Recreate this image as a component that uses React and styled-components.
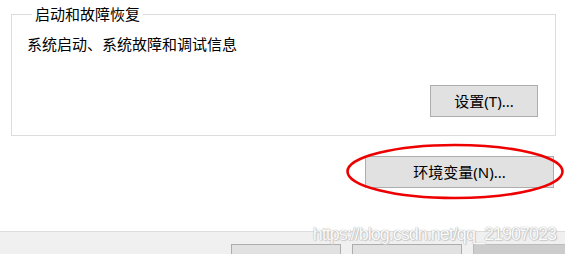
import styled, { createGlobalStyle } from "styled-components";

const GlobalStyle = createGlobalStyle`
  html, body {
    margin: 0;
    padding: 0;
    background: #ffffff;
  }
  body {
    font-family: "Noto Sans", "Noto Sans CJK SC", sans-serif;
    font-size: 15px;
    color: #000000;
  }
`;

const Page = styled.div`
  position: relative;
  width: 565px;
  height: 254px;
  overflow: hidden;
  display: flex;
  flex-direction: column;
  background: #ffffff;
`;

const Main = styled.div`
  flex: 0 0 227px;
  padding: 4px 10px 0 11px;
  display: flex;
  flex-direction: column;
`;

const GroupBox = styled.fieldset`
  margin: 0;
  width: 545px;
  box-sizing: border-box;
  border: 1px solid #dcdcdc;
  padding: 10px 17px 18px 15px;
  min-inline-size: 0;
  display: flex;
  flex-direction: column;
`;

const Legend = styled.legend`
  margin-left: 5px;
  padding: 0 3px;
  line-height: 20px;
`;

const Description = styled.p`
  margin: 0;
  line-height: 20px;
`;

const ButtonRow = styled.div`
  display: flex;
  justify-content: flex-end;
  margin-top: ${(p) => p.$gap || 0}px;
`;

const Button = styled.button`
  box-sizing: border-box;
  width: ${(p) => p.$width}px;
  height: 32px;
  padding: 0;
  border: 1px solid ${(p) => (p.$dim ? "#bcbcbc" : "#adadad")};
  background: ${(p) => (p.$dim ? "#cccccc" : "#e1e1e1")};
  font: inherit;
  line-height: 30px;
  color: #000000;
  text-align: center;
  flex: 0 0 auto;
`;

const Marked = styled.div`
  position: relative;
  margin-right: 1px;
`;

const Ring = styled.svg`
  position: absolute;
  left: -20px;
  top: -13px;
  width: 222px;
  height: 58px;
  overflow: visible;
  pointer-events: none;
`;

const Footer = styled.div`
  flex: 1;
  border-top: 1px solid #dcdcdc;
  background: #f0f0f0;
  padding-top: 12px;
  display: flex;
  justify-content: flex-end;
`;

const FooterButtons = styled.div`
  display: flex;
  gap: 11px;
  margin-right: -18px;

  ${Button} {
    line-height: 34px;
  }
`;

const Watermark = styled.div`
  position: absolute;
  right: 9px;
  top: 225px;
  font-family: "Liberation Sans", Arial, sans-serif;
  font-size: 18px;
  letter-spacing: -1px;
  line-height: 18px;
  color: rgba(255, 255, 255, 0.95);
  text-shadow: 0 0 1px #b4b4b4, 0 0 1px #b4b4b4, 1px 1px 1px #d0d0d0;
  pointer-events: none;
`;

export default function App() {
  return (
    <>
      <GlobalStyle />
      <Page>
        <Main>
          <GroupBox>
            <Legend>启动和故障恢复</Legend>
            <Description>系统启动、系统故障和调试信息</Description>
            <ButtonRow $gap={31}>
              <Button $width={108}>设置(T)...</Button>
            </ButtonRow>
          </GroupBox>
          <ButtonRow $gap={20}>
            <Marked>
              <Button $width={189}>环境变量(N)...</Button>
              <Ring viewBox="0 0 222 58">
                <ellipse
                  cx="110"
                  cy="28.5"
                  rx="107.5"
                  ry="26.5"
                  fill="none"
                  stroke="#ee0000"
                  strokeWidth="2.6"
                />
              </Ring>
            </Marked>
          </ButtonRow>
        </Main>
        <Footer>
          <FooterButtons>
            <Button $width={110}>确定</Button>
            <Button $width={110}>取消</Button>
            <Button $width={110} $dim>应用(A)</Button>
          </FooterButtons>
        </Footer>
        <Watermark>https://blog.csdn.net/qq_21907023</Watermark>
      </Page>
    </>
  );
}
